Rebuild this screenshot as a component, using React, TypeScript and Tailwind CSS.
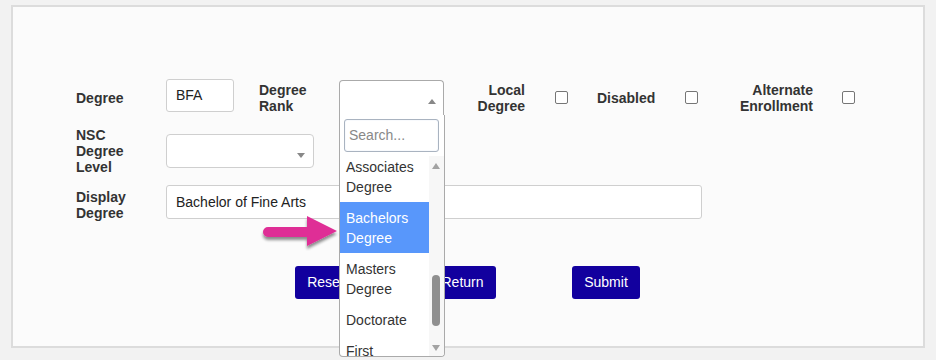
import React from "react";

const Label = ({ children, className = "" }: { children: React.ReactNode; className?: string }) => (
  <div className={`font-bold leading-[16px] text-[14px] text-[#333] ${className}`}>{children}</div>
);

const Check = ({ className = "" }: { className?: string }) => (
  <div className={`w-[13px] h-[13px] border border-[#767676] rounded-[2px] bg-white shrink-0 ${className}`} />
);

export default function App() {
  const items = [
    { t: ["Associates", "Degree"], hl: false },
    { t: ["Bachelors", "Degree"], hl: true },
    { t: ["Masters", "Degree"], hl: false },
    { t: ["Doctorate"], hl: false },
    { t: ["First"], hl: false },
  ];
  return (
    <div className="relative w-[936px] h-[360px] overflow-hidden bg-[#f2f2f2] pt-[5px] pl-[11px] font-['Liberation_Sans',Arial,sans-serif] text-[14px] text-[#333]">
      <div className="w-[914px] h-[343px] border-2 border-[#dcdcdc] bg-[#fbfbfb] pl-[63px] pt-[72px]">
        {/* Row 1 */}
        <div className="flex items-start h-[37px]">
          <Label className="w-[90px] mt-[11px]">Degree</Label>
          <div className="w-[68px] h-[33px] border border-[#cfcfcf] rounded-[3px] bg-white px-[9px] leading-[31px] text-[14px] text-[#222]">BFA</div>
          <Label className="ml-[25px] w-[80px] mt-[3px]">
            Degree
            <br />
            Rank
          </Label>
          <div className="relative w-[105px] h-[36px] mt-[1px] z-10">
            <div className="w-full h-[36px] border border-[#aaa] border-b-[#ddd] rounded-t-[4px] bg-white relative">
              <div className="absolute right-[7px] top-[18px] w-0 h-0 border-l-[4px] border-r-[4px] border-b-[5px] border-l-transparent border-r-transparent border-b-[#888]" />
            </div>
            <div className="absolute left-0 top-[35px] w-[106px] h-[242px] border border-[#aaa] border-t-0 rounded-b-[4px] bg-white overflow-hidden">
              <div className="pt-[4px] pl-[4px] pr-[5px] pb-[4px]">
                <div className="w-[95px] h-[33px] border border-[#a9b3c0] rounded-[3px] bg-white pl-[4px] leading-[31px] text-[14px] text-[#888] shadow-[inset_0_0_1px_rgba(80,140,220,0.35)]">
                  Search...
                </div>
              </div>
              <div className="flex h-[200px]">
                <div className="w-[89px] overflow-hidden">
                  <div className="-mt-[5px]">
                    {items.map((it, i) => (
                      <div
                        key={i}
                        className={`pt-[6px] pb-[5px] pl-[6px] leading-[20px] text-[14px] ${it.hl ? "bg-[#5897fb] text-white" : "text-[#333]"}`}
                      >
                        {it.t.map((l, j) => (
                          <div key={j}>{l}</div>
                        ))}
                      </div>
                    ))}
                  </div>
                </div>
                <div className="relative w-[15px] h-full bg-[#f7f7f7]">
                  <div className="absolute left-[3px] top-[7px] w-0 h-0 border-l-[4px] border-r-[4px] border-b-[6px] border-l-transparent border-r-transparent border-b-[#a3a3a3]" />
                  <div className="absolute left-[3px] top-[119px] w-[8px] h-[51px] rounded-full bg-[#8f8f8f]" />
                  <div className="absolute left-[3px] top-[189px] w-0 h-0 border-l-[4px] border-r-[4px] border-t-[6px] border-l-transparent border-r-transparent border-t-[#a3a3a3]" />
                </div>
              </div>
            </div>
          </div>
          <Label className="w-[81px] text-right mt-[3px]">
            Local
            <br />
            Degree
          </Label>
          <Check className="ml-[30px] mt-[12px]" />
          <Label className="ml-[29px] w-[88px] mt-[11px]">Disabled</Label>
          <Check className="mt-[12px]" />
          <Label className="w-[115px] text-right mt-[3px]">
            Alternate
            <br />
            Enrollment
          </Label>
          <Check className="ml-[29px] mt-[12px]" />
        </div>

        {/* Row 2 */}
        <div className="flex items-start mt-[11px]">
          <Label className="w-[90px]">
            NSC
            <br />
            Degree
            <br />
            Level
          </Label>
          <div className="relative w-[148px] h-[34px] mt-[7px] border border-[#cfcfcf] rounded-[4px] bg-white">
            <div className="absolute right-[8px] top-[18px] w-0 h-0 border-l-[4px] border-r-[4px] border-t-[5px] border-l-transparent border-r-transparent border-t-[#888]" />
          </div>
        </div>

        {/* Row 3 */}
        <div className="flex items-start mt-[10px]">
          <Label className="w-[90px] mt-[4px]">
            Display
            <br />
            Degree
          </Label>
          <div className="w-[536px] h-[34px] border border-[#cfcfcf] rounded-[3px] bg-white px-[9px] leading-[32px] text-[14px] text-[#222]">
            Bachelor of Fine Arts
          </div>
        </div>

        {/* Buttons */}
        <div className="flex items-start mt-[45px] pl-[219px]">
          <button className="w-[61px] h-[33px] rounded-[3px] bg-[#12009e] text-white text-[14px] leading-[33px] text-center">Reset</button>
          <button className="ml-[73px] w-[67px] h-[33px] rounded-[3px] bg-[#12009e] text-white text-[14px] leading-[33px] text-center">Return</button>
          <button className="ml-[76px] w-[68px] h-[33px] rounded-[3px] bg-[#12009e] text-white text-[14px] leading-[33px] text-center">Submit</button>
        </div>
      </div>

      {/* Pink arrow annotation */}
      <svg className="absolute left-[255px] top-[208px]" width="90" height="48" viewBox="255 208 90 48">
        <defs>
          <filter id="sh" x="-20%" y="-20%" width="140%" height="160%">
            <feGaussianBlur in="SourceAlpha" stdDeviation="1.8" />
            <feOffset dx="0" dy="3" result="b" />
            <feComponentTransfer>
              <feFuncA type="linear" slope="0.45" />
            </feComponentTransfer>
            <feMerge>
              <feMergeNode />
              <feMergeNode in="SourceGraphic" />
            </feMerge>
          </filter>
        </defs>
        <path
          d="M268 227 L307 227 L307 216 L337 231 L307 246 L307 237 L268 237 A5 5 0 0 1 268 227 Z"
          fill="#df2f96"
          filter="url(#sh)"
        />
      </svg>
    </div>
  );
}
